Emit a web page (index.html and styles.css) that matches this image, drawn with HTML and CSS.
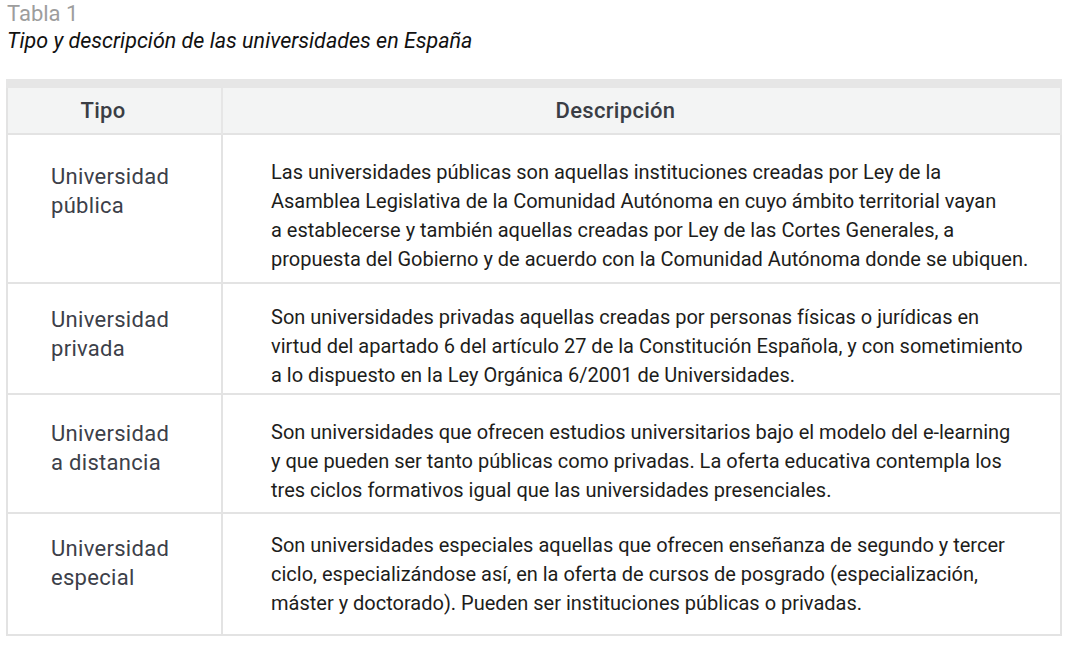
FILE: index.html
```html
<!DOCTYPE html>
<html lang="es">
<head>
<meta charset="utf-8">
<title>Tabla 1</title>
<link rel="stylesheet" href="styles.css">
</head>
<body>
<div class="page">
  <div class="caption">
    <div class="label">Tabla 1</div>
    <div class="title">Tipo y descripción de las universidades en España</div>
  </div>
  <table class="tbl">
    <thead>
      <tr>
        <th class="h-tipo">Tipo</th>
        <th class="h-desc">Descripción</th>
      </tr>
    </thead>
    <tbody>
      <tr class="r1">
        <td class="tipo">Universidad<br>pública</td>
        <td class="desc">Las universidades públicas son aquellas instituciones creadas por Ley de la<br>Asamblea Legislativa de la Comunidad Autónoma en cuyo ámbito territorial vayan<br>a establecerse y también aquellas creadas por Ley de las Cortes Generales, a<br>propuesta del Gobierno y de acuerdo con la Comunidad Autónoma donde se ubiquen.</td>
      </tr>
      <tr class="r2">
        <td class="tipo">Universidad<br>privada</td>
        <td class="desc">Son universidades privadas aquellas creadas por personas físicas o jurídicas en<br>virtud del apartado 6 del artículo 27 de la Constitución Española, y con sometimiento<br>a lo dispuesto en la Ley Orgánica 6/2001 de Universidades.</td>
      </tr>
      <tr class="r3">
        <td class="tipo">Universidad<br>a distancia</td>
        <td class="desc">Son universidades que ofrecen estudios universitarios bajo el modelo del e-learning<br>y que pueden ser tanto públicas como privadas. La oferta educativa contempla los<br>tres ciclos formativos igual que las universidades presenciales.</td>
      </tr>
      <tr class="r4">
        <td class="tipo">Universidad<br>especial</td>
        <td class="desc">Son universidades especiales aquellas que ofrecen enseñanza de segundo y tercer<br>ciclo, especializándose así, en la oferta de cursos de posgrado (especialización,<br>máster y doctorado). Pueden ser instituciones públicas o privadas.</td>
      </tr>
    </tbody>
  </table>
</div>
</body>
</html>
```

FILE: styles.css
```css
* { box-sizing: border-box; }

html, body {
  margin: 0;
  padding: 0;
  background: #ffffff;
}

body {
  font-family: Roboto, "Liberation Sans", sans-serif;
  color: #1d1d1b;
}

.page {
  padding: 0 9px 0 6px;
}

.caption {
  padding-left: 1px;
  height: 79px;
}

.label {
  font-size: 22px;
  line-height: 28px;
  color: #9d9d9d;
}

.title {
  font-size: 21.5px;
  line-height: 26px;
  font-style: italic;
  color: #111111;
}

.tbl {
  width: 1056px;
  border-collapse: collapse;
  border-left: 2px solid #e3e3e3;
  border-right: 2px solid #e3e3e3;
  border-bottom: 2px solid #e3e3e3;
}

.tbl thead tr {
  background: #f3f4f4;
  border-top: 9px solid #e6e6e6;
}

.tbl th {
  height: 50px;
  padding: 0;
  font-size: 22px;
  font-weight: 500;
  letter-spacing: 0.3px;
  color: #3a3d44;
  text-align: center;
  vertical-align: middle;
  border-right: 2px solid #e6e6e6;
}

.tbl th.h-tipo {
  width: 215px;
  padding-right: 23px;
}

.tbl th.h-desc {
  padding-right: 52px;
}

.tbl td {
  vertical-align: top;
  border-top: 2px solid #e3e3e3;
  border-right: 2px solid #e3e3e3;
  line-height: 29px;
}

.tbl td.tipo {
  font-size: 22px;
  letter-spacing: 0.3px;
  color: #3c4049;
  padding-left: 43px;
}

.tbl td.desc {
  font-size: 20px;
  color: #1d1d1b;
  padding-left: 48px;
  white-space: nowrap;
}

.r1 td { padding-top: 23px; padding-bottom: 8px; }
.r2 td { padding-top: 19px; padding-bottom: 3px; }
.r3 td { padding-top: 23px; padding-bottom: 7px; }
.r4 td { padding-top: 17px; padding-bottom: 16px; }

.r1 td.tipo { padding-top: 27px; }
.r2 td.tipo { padding-top: 21px; }
.r3 td.tipo { padding-top: 24px; }
.r4 td.tipo { padding-top: 20px; }
```
